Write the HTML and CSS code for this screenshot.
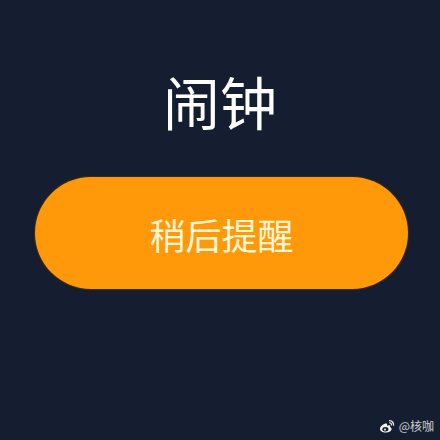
FILE: index.html
```html
<!DOCTYPE html>
<html lang="zh">
<head>
<meta charset="utf-8">
<link rel="stylesheet" href="styles.css">
</head>
<body>
<main class="screen">
  <h1 class="title">闹钟</h1>
  <div class="snooze">稍后提醒</div>
  <div class="mark">
    <svg class="weibo" width="16" height="14" viewBox="0 0 16 14">
      <path d="M6.2 4.6c-2.6 0.8-5.2 3.3-5.2 5.4 0 2.1 2.6 3.5 5.6 3.5 3.4 0 6-1.8 6-3.6 0-1.3-1.1-1.6-1.6-1.7 0.4-0.7 0.5-1.7-0.6-1.9-0.9-0.2-2 0.4-2.4 0.5 0.3-0.9 0.2-1.9-0.6-2.2-0.3-0.1-0.8 0-1.2 0z" fill="#f2f2f2"/>
      <ellipse cx="6.4" cy="10.2" rx="3" ry="2.2" fill="#1a1f2b"/>
      <circle cx="6" cy="10.4" r="1" fill="#f2f2f2"/>
      <path d="M10.5 1.6a4 4 0 0 1 4 4.6" stroke="#f2f2f2" stroke-width="1.3" fill="none" stroke-linecap="round"/>
      <path d="M10.5 3.7a2 2 0 0 1 2 2.3" stroke="#f2f2f2" stroke-width="1.1" fill="none" stroke-linecap="round"/>
    </svg>
    <span class="handle">@核咖</span>
  </div>
</main>
</body>
</html>
```

FILE: styles.css
```css
html, body {
  margin: 0;
  padding: 0;
}
body {
  width: 440px;
  height: 440px;
  background: #141e30;
  overflow: hidden;
  font-family: "Noto Sans CJK SC", "Noto Sans", sans-serif;
}
.screen {
  position: relative;
  width: 440px;
  height: 440px;
  display: flex;
  flex-direction: column;
  align-items: flex-start;
}
.title {
  align-self: center;
  margin: 68px 0 0 0;
  font-size: 57px;
  line-height: 64px;
  font-weight: 400;
  color: #ffffff;
  letter-spacing: 0;
}
.snooze {
  margin: 45px 0 0 35px;
  width: 373px;
  height: 112px;
  border-radius: 56px;
  background: #ff990a;
  box-shadow: 0 0 1px 1px #3a2a12;
  display: flex;
  align-items: center;
  justify-content: center;
  color: #fff6d8;
  font-size: 36px;
  font-weight: 400;
  padding-top: 2px;
  box-sizing: border-box;
}
.mark {
  position: absolute;
  right: 6px;
  bottom: 7px;
  display: flex;
  align-items: center;
  gap: 4px;
}
.handle {
  font-size: 12px;
  color: #cfcfcf;
  line-height: 14px;
}
```
